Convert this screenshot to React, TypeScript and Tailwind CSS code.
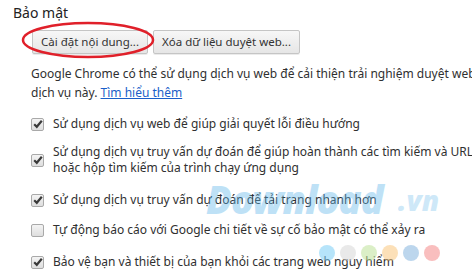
import React from 'react';

const Checkbox = ({ checked }: { checked: boolean }) => (
  <span className="flex h-[13px] w-[13px] shrink-0 items-center justify-center rounded-[2px] border border-[#a9a9a9] bg-gradient-to-b from-[#f4f4f4] to-[#dedede]">
    {checked && (
      <svg width="10" height="10" viewBox="0 0 10 10">
        <path d="M1.2 5.2 L3.8 7.8 L8.8 1.8" fill="none" stroke="#3a3a3a" strokeWidth="2.2" strokeLinejoin="miter" />
      </svg>
    )}
  </span>
);

const options = [
  { checked: true, mt: 'mt-0', lines: ['Sử dụng dịch vụ web để giúp giải quyết lỗi điều hướng'] },
  {
    checked: true,
    mt: 'mt-[12px]',
    lines: [
      'Sử dụng dịch vụ truy vấn dự đoán để giúp hoàn thành các tìm kiếm và URL được nhập vào thanh địa chỉ',
      'hoặc hộp tìm kiếm của trình chạy ứng dụng',
    ],
  },
  { checked: true, mt: 'mt-[16px]', lines: ['Sử dụng dịch vụ truy vấn dự đoán để tải trang nhanh hơn'] },
  { checked: false, mt: 'mt-[14px]', lines: ['Tự động báo cáo với Google chi tiết về sự cố bảo mật có thể xảy ra'] },
  { checked: true, mt: 'mt-[16px]', lines: ['Bảo vệ bạn và thiết bị của bạn khỏi các trang web nguy hiểm'] },
];

export default function App() {
  return (
    <div className="relative h-[275px] w-[472px] overflow-hidden bg-white font-['Noto_Sans',sans-serif] text-[12px] text-[#303030]">
      <div className="pl-[13px] pt-[2px] text-[14px] text-[#222]">Bảo mật</div>

      <div className="ml-[32px] mt-[7px] flex gap-[5px]">
        <button className="h-[24px] whitespace-nowrap rounded-[2px] border border-[#c5c5c5] bg-gradient-to-b from-[#f7f7f7] to-[#e6e6e6] px-[8px] text-[11.5px] text-[#333] shadow-[0_1px_0_rgba(0,0,0,0.08)]">
          Cài đặt nội dung...
        </button>
        <button className="h-[24px] whitespace-nowrap rounded-[2px] border border-[#c5c5c5] bg-gradient-to-b from-[#f7f7f7] to-[#e6e6e6] px-[8px] text-[11.5px] text-[#333] shadow-[0_1px_0_rgba(0,0,0,0.08)]">
          Xóa dữ liệu duyệt web...
        </button>
      </div>

      <p className="ml-[31px] mt-[10px] whitespace-nowrap leading-[19px]">
        Google Chrome có thể sử dụng dịch vụ web để cải thiện trải nghiệm duyệt web của bạn. Bạn có thể tùy ý vô hiệu hóa
        <br />
        dịch vụ này. <span className="text-[#1a5fc9] underline">Tìm hiểu thêm</span>
      </p>

      <div className="ml-[31px] mt-[14px] flex flex-col">
        {options.map((o, i) => (
          <label key={i} className={`flex items-center gap-[9px] ${o.mt}`}>
            <Checkbox checked={o.checked} />
            <span className="whitespace-nowrap leading-[16px]">
              {o.lines.map((l, j) => (
                <span key={j} className="block">
                  {l}
                </span>
              ))}
            </span>
          </label>
        ))}
      </div>

      {/* watermark */}
      <div className="pointer-events-none absolute left-[206px] top-[180px] select-none text-[38px] font-black italic leading-none tracking-[-1px] text-[#5fb6ea] opacity-40">
        Download
      </div>
      <div className="pointer-events-none absolute left-[398px] top-[186px] select-none text-[28px] font-black italic leading-none text-[#5fb6ea] opacity-30">
        .vn
      </div>
      <div className="pointer-events-none absolute left-[319px] top-[245px] flex gap-[5px] opacity-55">
        <span className="h-[16px] w-[16px] rounded-full bg-[#7ccff7]" />
        <span className="h-[16px] w-[16px] rounded-full bg-[#d8d8d8]" />
        <span className="h-[16px] w-[16px] rounded-full bg-[#bfe39a]" />
        <span className="h-[16px] w-[16px] rounded-full bg-[#fbc87f]" />
        <span className="h-[16px] w-[16px] rounded-full bg-[#86b6e0]" />
        <span className="h-[16px] w-[16px] rounded-full bg-[#f58a8a]" />
      </div>

      {/* red highlight ellipse */}
      <svg className="pointer-events-none absolute left-[20px] top-[20px]" width="136" height="40" viewBox="0 0 136 40">
        <ellipse cx="68" cy="20" rx="65" ry="17" fill="none" stroke="#e0202a" strokeWidth="2.5" />
      </svg>
    </div>
  );
}
